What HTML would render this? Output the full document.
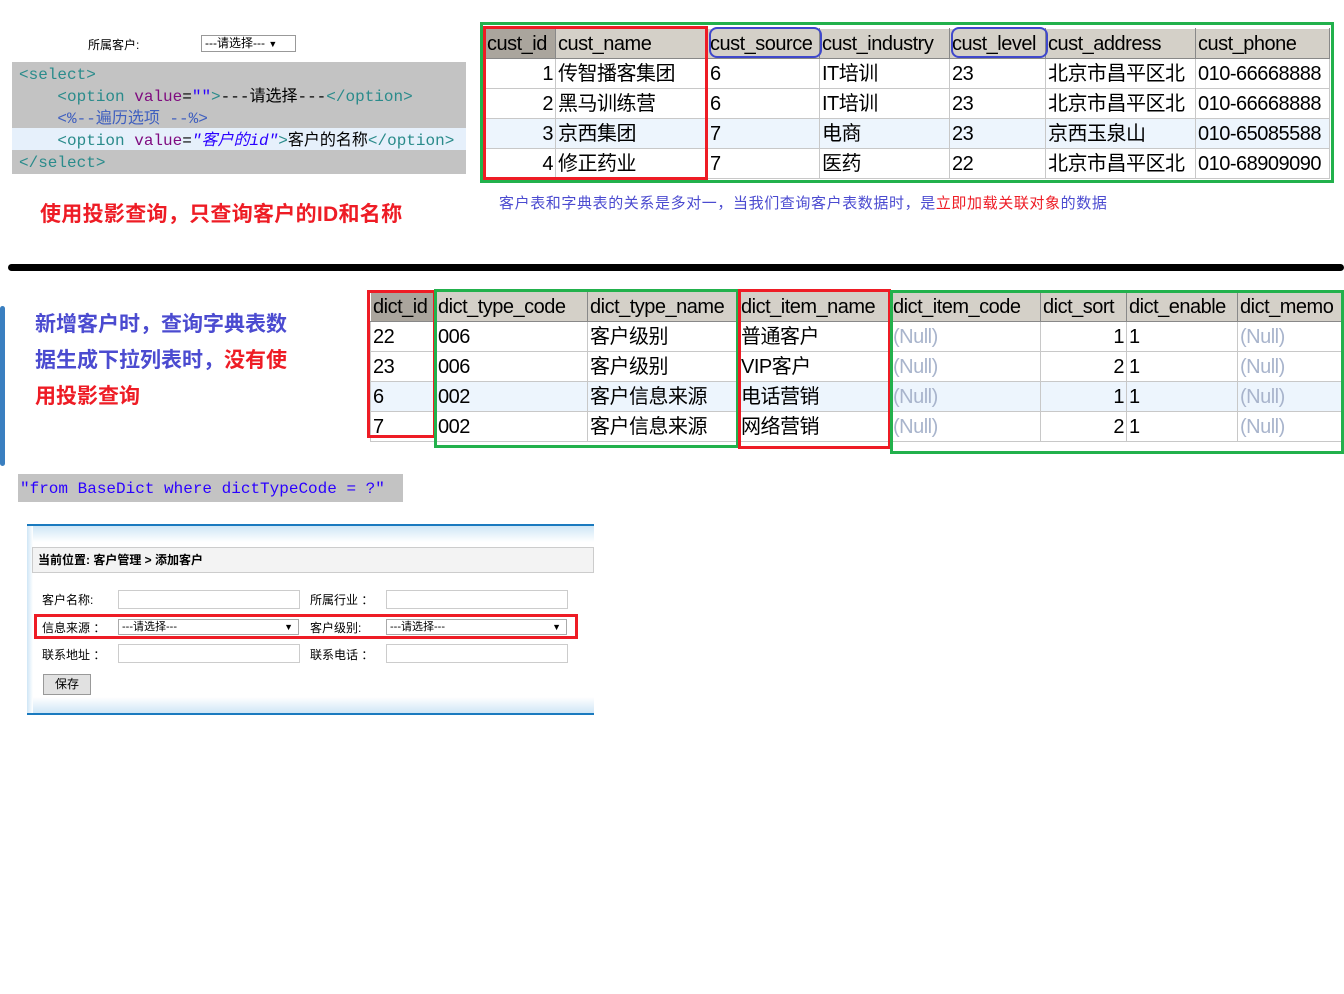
<!DOCTYPE html>
<html><head><meta charset="utf-8">
<style>
*{margin:0;padding:0;box-sizing:border-box}
body{width:1344px;height:994px;background:#fff;position:relative;overflow:hidden;font-family:"Liberation Sans","Noto Sans CJK SC",sans-serif}
.a{position:absolute}
.code{font-family:"Liberation Mono","Noto Sans CJK SC",monospace;font-size:16px;color:#2a8b8b;white-space:pre}
table{border-collapse:collapse;position:absolute;font-family:"Liberation Sans","Noto Sans CJK SC",sans-serif;font-size:20px;letter-spacing:-0.5px}
td{height:30px;border:1px solid #c8c8c8;padding:0 2px;white-space:nowrap;overflow:hidden;line-height:28px}
tr.h td{background:#d4d0c8;border-color:#fff #888 #888 #fff}
tr.b td{background:#edf5fd}
.r{text-align:right}
.null{color:#a8b4cc}
.box{position:absolute;border:3px solid}
.lbl{position:absolute;font-size:12px}
.inp{position:absolute;height:19px;border:1px solid #ccc;background:#fff}
.sel{position:absolute;height:16px;border:1px solid #aaa;font-size:11px;line-height:14px;padding-left:3px}
.sel:after{content:"▼";position:absolute;right:5px;font-size:9px}
</style></head><body>

<div class="a" style="left:88px;top:36px;font-size:12px">所属客户:</div>
<div class="a" style="left:201px;top:35px;width:95px;height:17px;border:1px solid #999;font-size:12px;line-height:15px;padding-left:3px">---请选择--- <span style="font-size:9px">▼</span></div>

<div class="a" style="left:12px;top:62px;width:454px;height:112px;background:#c3c3c3"></div>
<div class="a" style="left:12px;top:128px;width:454px;height:22px;background:#e6f0fb"></div>
<div class="a code" style="left:19px;top:64px;line-height:22px">&lt;select&gt;
    &lt;option <span style="color:#7f0a7f">value</span><span style="color:#000">=</span><span style="color:#2a00ff">""</span>&gt;<span style="color:#000">---请选择---</span>&lt;/option&gt;
    <span style="color:#3f5fbf">&lt;%--遍历选项 --%&gt;</span>
    &lt;option <span style="color:#7f0a7f">value</span><span style="color:#000">=</span><span style="color:#2a00ff;font-style:italic">"客户的id"</span>&gt;<span style="color:#000">客户的名称</span>&lt;/option&gt;
&lt;/select&gt;</div>

<div class="a" style="left:40px;top:198px;font-size:21px;font-weight:bold;color:#ee1c25;letter-spacing:0.3px">使用投影查询，只查询客户的ID和名称</div>

<table style="left:484px;top:28px">
<tr class="h"><td style="width:71px;background:#aaa59d">cust_id</td><td style="width:152px">cust_name</td><td style="width:112px">cust_source</td><td style="width:130px">cust_industry</td><td style="width:96px">cust_level</td><td style="width:150px">cust_address</td><td style="width:134px">cust_phone</td></tr>
<tr><td class="r">1</td><td>传智播客集团</td><td>6</td><td>IT培训</td><td>23</td><td>北京市昌平区北</td><td>010-66668888</td></tr>
<tr><td class="r">2</td><td>黑马训练营</td><td>6</td><td>IT培训</td><td>23</td><td>北京市昌平区北</td><td>010-66668888</td></tr>
<tr class="b"><td class="r">3</td><td>京西集团</td><td>7</td><td>电商</td><td>23</td><td>京西玉泉山</td><td>010-65085588</td></tr>
<tr><td class="r">4</td><td>修正药业</td><td>7</td><td>医药</td><td>22</td><td>北京市昌平区北</td><td>010-68909090</td></tr>
</table>
<div class="box" style="left:480px;top:22px;width:854px;height:161px;border-color:#22b14c"></div>
<div class="box" style="left:483px;top:26px;width:225px;height:154px;border-color:#ee1c25"></div>
<div class="box" style="left:709px;top:27px;width:113px;height:31px;border-color:#3f48cc;border-radius:8px;border-width:2px"></div>
<div class="box" style="left:951px;top:27px;width:97px;height:31px;border-color:#3f48cc;border-radius:8px;border-width:2px"></div>
<div class="a" style="left:499px;top:192px;font-size:15px;color:#4b4bd0;letter-spacing:0.6px">客户表和字典表的关系是多对一，当我们查询客户表数据时，是<span style="color:#ee1c25">立即加载关联对象</span>的数据</div>

<div class="a" style="left:8px;top:264px;width:1336px;height:7px;background:#000;border-radius:4px"></div>

<div class="a" style="left:0;top:306px;width:5px;height:160px;background:#3a7fc0;border-radius:3px"></div>
<div class="a" style="left:35px;top:307px;font-size:21px;font-weight:bold;color:#4b4bd0;line-height:36px">新增客户时，查询字典表数<br>据生成下拉列表时，<span style="color:#ee1c25">没有使</span><br><span style="color:#ee1c25">用投影查询</span></div>

<table style="left:370px;top:291px">
<tr class="h"><td style="width:65px;background:#aaa59d">dict_id</td><td style="width:152px">dict_type_code</td><td style="width:151px">dict_type_name</td><td style="width:152px">dict_item_name</td><td style="width:150px">dict_item_code</td><td style="width:86px">dict_sort</td><td style="width:111px">dict_enable</td><td style="width:105px">dict_memo</td></tr>
<tr><td>22</td><td>006</td><td>客户级别</td><td>普通客户</td><td class="null">(Null)</td><td class="r">1</td><td>1</td><td class="null">(Null)</td></tr>
<tr><td>23</td><td>006</td><td>客户级别</td><td>VIP客户</td><td class="null">(Null)</td><td class="r">2</td><td>1</td><td class="null">(Null)</td></tr>
<tr class="b"><td>6</td><td>002</td><td>客户信息来源</td><td>电话营销</td><td class="null">(Null)</td><td class="r">1</td><td>1</td><td class="null">(Null)</td></tr>
<tr><td>7</td><td>002</td><td>客户信息来源</td><td>网络营销</td><td class="null">(Null)</td><td class="r">2</td><td>1</td><td class="null">(Null)</td></tr>
</table>
<div class="box" style="left:367px;top:290px;width:69px;height:148px;border-color:#ee1c25"></div>
<div class="box" style="left:434px;top:289px;width:305px;height:159px;border-color:#22b14c"></div>
<div class="box" style="left:738px;top:289px;width:153px;height:160px;border-color:#ee1c25"></div>
<div class="box" style="left:890px;top:290px;width:454px;height:164px;border-color:#22b14c"></div>

<div class="a code" style="left:18px;top:474px;width:385px;height:28px;background:#c3c3c3;color:#2a00ff;line-height:30px;padding-left:2px">"from BaseDict where dictTypeCode = ?"</div>

<div class="a" style="left:27px;top:524px;width:567px;height:191px;background:#fff;border-top:2px solid #1a7abf;border-bottom:2px solid #1a7abf"></div>
<div class="a" style="left:27px;top:526px;width:567px;height:16px;background:linear-gradient(#cfe6f6,#fff)"></div>
<div class="a" style="left:27px;top:697px;width:567px;height:16px;background:linear-gradient(#fff,#cfe6f6)"></div>
<div class="a" style="left:27px;top:526px;width:6px;height:187px;background:linear-gradient(90deg,#cfe6f6,#fff)"></div>
<div class="a" style="left:32px;top:547px;width:562px;height:26px;background:#f3f3f3;border:1px solid #ccc;font-size:12px;font-weight:bold;line-height:24px;padding-left:5px">当前位置: 客户管理 &gt; 添加客户</div>
<div class="lbl" style="left:42px;top:591px">客户名称:</div><div class="inp" style="left:118px;top:590px;width:182px"></div>
<div class="lbl" style="left:310px;top:591px">所属行业 ：</div><div class="inp" style="left:386px;top:590px;width:182px"></div>
<div class="lbl" style="left:42px;top:619px">信息来源 ：</div><div class="sel" style="left:118px;top:619px;width:181px">---请选择---</div>
<div class="lbl" style="left:310px;top:619px">客户级别:</div><div class="sel" style="left:386px;top:619px;width:181px">---请选择---</div>
<div class="box" style="left:34px;top:614px;width:544px;height:25px;border-color:#ee1c25"></div>
<div class="lbl" style="left:42px;top:646px">联系地址 ：</div><div class="inp" style="left:118px;top:644px;width:182px"></div>
<div class="lbl" style="left:310px;top:646px">联系电话 ：</div><div class="inp" style="left:386px;top:644px;width:182px"></div>
<div class="a" style="left:43px;top:674px;width:48px;height:21px;background:#e1e1e1;border:1px solid #999;font-size:12px;text-align:center;line-height:19px">保存</div>
</body></html>
